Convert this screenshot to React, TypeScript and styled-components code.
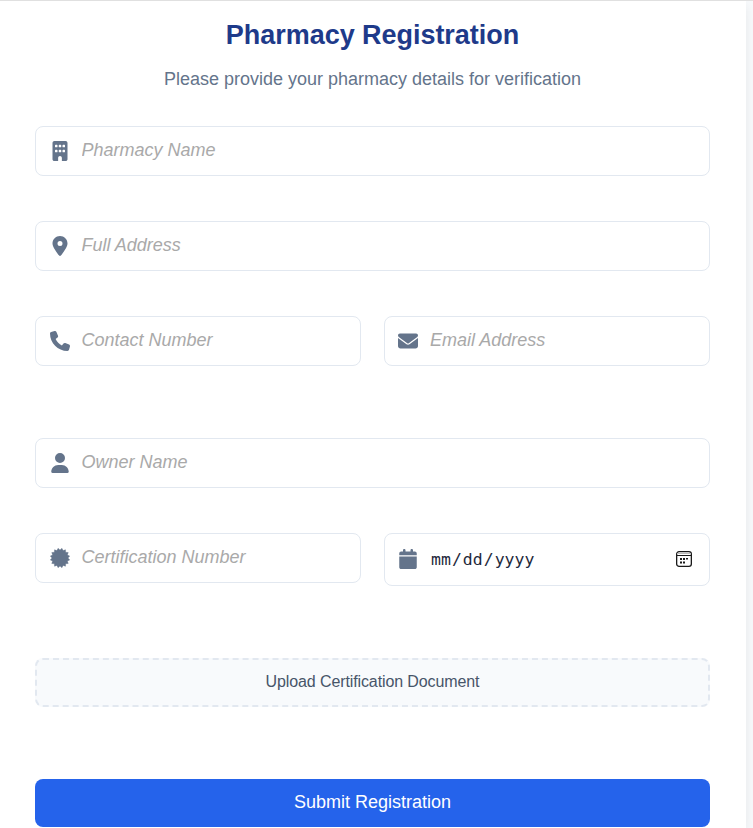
import React from 'react';
import styled, { createGlobalStyle } from 'styled-components';
import {
  FaBuilding,
  FaCalendar,
  FaEnvelope,
  FaLocationDot,
  FaPhone,
  FaUser,
} from 'react-icons/fa6';

const GlobalStyle = createGlobalStyle`
  * { box-sizing: border-box; }
  body {
    margin: 0;
    overflow: hidden;
    background: #f8fafc;
    font-family: "Liberation Sans", Arial, sans-serif;
  }
`;

const Card = styled.main`
  width: 746px;
  height: 828px;
  padding: 17px 36px 0 35px;
  background: #fff;
  box-shadow: 0 4px 12px rgba(0, 0, 0, 0.08);
`;

const Page = styled.div`
  height: 828px;
  overflow: hidden;
  border-top: 1px solid #e0e0e0;
`;

const Title = styled.h1`
  margin: 0;
  height: 34px;
  line-height: 34px;
  text-align: center;
  font-size: 27px;
  font-weight: 700;
  letter-spacing: -0.04px;
  color: #1e3a8a;
`;

const Subtitle = styled.p`
  margin: 11px 0 0;
  height: 32px;
  line-height: 32px;
  text-align: center;
  font-size: 18px;
  color: #64748b;
`;

const Form = styled.form`
  display: flex;
  flex-direction: column;
  margin-top: 31px;
`;

const IconSlot = styled.span`
  display: flex;
  flex: none;
  justify-content: center;
  width: 20px;
  margin-right: 11.5px;
  color: #64748b;

  svg {
    display: block;
    height: 20px;
  }
`;

const Field = styled.label`
  display: flex;
  align-items: center;
  height: 50px;
  padding: 0 15px 0 14px;
  border: 1px solid #e2e8f0;
  border-radius: 8px;
  background: #fff;

  & + & {
    padding-left: 13px;
  }

  & + & ${IconSlot} {
    margin-right: 12px;
  }
`;

const DateField = styled(Field)`
  height: 53px;
  padding: 0 17px 2px 13px;
`;

const Row = styled.div<{ $after: number }>`
  display: grid;
  grid-auto-flow: column;
  grid-auto-columns: 1fr;
  align-items: start;
  column-gap: 23px;
  margin-bottom: ${(p) => p.$after}px;
`;

const Input = styled.input`
  flex: 1;
  min-width: 0;
  height: 24px;
  padding: 0;
  margin-bottom: 2px;
  border: 0;
  outline: 0;
  background: transparent;
  font: 18px "Liberation Sans", Arial, sans-serif;

  &::placeholder {
    font-style: italic;
    color: #a9a9a9;
    opacity: 1;
  }
`;

const DateText = styled.span`
  display: flex;
  flex: 1;
  gap: 1px;
  padding: 2px 0 0 1px;
  font: 16.5px "DejaVu Sans Mono", monospace;
  color: #1e293b;
`;

const Upload = styled.button`
  height: 49px;
  padding: 0 0 1px;
  border: 2px dashed #e2e8f0;
  border-radius: 8px;
  background: #f8fafc;
  font: 16px "Liberation Sans", Arial, sans-serif;
  letter-spacing: -0.11px;
  color: #475569;
`;

const Submit = styled.button`
  height: 48px;
  margin-top: 72px;
  padding: 0 0 2px;
  border: 0;
  border-radius: 8px;
  background: #2563eb;
  font: 18px "Liberation Sans", Arial, sans-serif;
  color: #fff;
`;

const sealPoints = Array.from({ length: 32 }, (_, i) => {
  const radius = i % 2 === 0 ? 9.9 : 8;
  const angle = ((i + 1) * Math.PI) / 16;
  return `${(10 + radius * Math.sin(angle)).toFixed(2)},${(10 - radius * Math.cos(angle)).toFixed(2)}`;
}).join(' ');

const SealIcon = () => (
  <svg width="20" height="20" viewBox="0 0 20 20" fill="currentColor">
    <polygon points={sealPoints} stroke="currentColor" strokeWidth="0.4" strokeLinejoin="round" />
  </svg>
);

const PickerIcon = () => (
  <svg width="16" height="16" viewBox="0 0 16 16">
    <rect x="0.65" y="0.65" width="14.7" height="14.7" rx="2.4" fill="none" stroke="#1a1a1a" strokeWidth="1.3" />
    <path d="M1 2.5H15" stroke="#bbb" strokeWidth="1" />
    <path d="M1 4.5H15" stroke="#1a1a1a" strokeWidth="1" />
    <path
      d="M4 7h2v2H4zM7 7h2v2H7zM10 7h2v1.6h-2zM4 10.4h2v2H4zM7 10.4h2v2H7z"
      fill="#1a1a1a"
    />
  </svg>
);

type TextFieldProps = { icon: React.ReactNode; placeholder: string };

const TextField = ({ icon, placeholder }: TextFieldProps) => (
  <Field>
    <IconSlot>{icon}</IconSlot>
    <Input placeholder={placeholder} />
  </Field>
);

export default function App() {
  return (
    <Page>
      <GlobalStyle />
      <Card>
        <Title>Pharmacy Registration</Title>
        <Subtitle>Please provide your pharmacy details for verification</Subtitle>
        <Form>
          <Row $after={45}>
            <TextField icon={<FaBuilding size={20} />} placeholder="Pharmacy Name" />
          </Row>
          <Row $after={45}>
            <TextField icon={<FaLocationDot size={20} />} placeholder="Full Address" />
          </Row>
          <Row $after={72}>
            <TextField icon={<FaPhone size={20} />} placeholder="Contact Number" />
            <TextField icon={<FaEnvelope size={20} />} placeholder="Email Address" />
          </Row>
          <Row $after={45}>
            <TextField icon={<FaUser size={20} />} placeholder="Owner Name" />
          </Row>
          <Row $after={72}>
            <TextField icon={<SealIcon />} placeholder="Certification Number" />
            <DateField>
              <IconSlot>
                <FaCalendar size={20} />
              </IconSlot>
              <DateText>
                <span>mm</span>
                <span>/</span>
                <span>dd</span>
                <span>/</span>
                <span>yyyy</span>
              </DateText>
              <PickerIcon />
            </DateField>
          </Row>
          <Upload type="button">Upload Certification Document</Upload>
          <Submit type="button">Submit Registration</Submit>
        </Form>
      </Card>
    </Page>
  );
}
